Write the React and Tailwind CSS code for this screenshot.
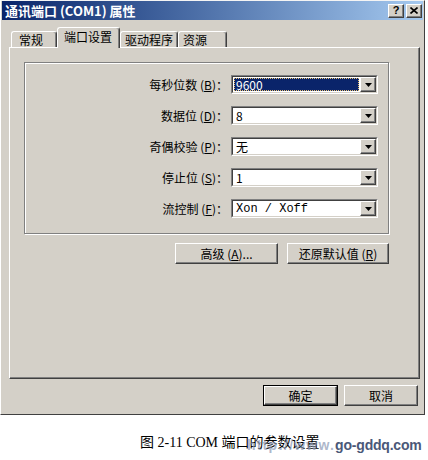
const Raised = ({ className = "", children }) => (
  <div
    className={`flex items-center justify-center border border-t-white border-l-white border-r-[#404040] border-b-[#404040] shadow-[inset_-1px_-1px_0_#808080] bg-[#d4d0c8] ${className}`}
  >
    {children}
  </div>
);

const Arrow = () => (
  <svg width="7" height="4" viewBox="0 0 7 4">
    <polygon points="0,0 7,0 3.5,4" fill="#000" />
  </svg>
);

const Combo = ({ value, selected, mono }) => (
  <div className="ml-[3px] w-[147px] h-[19px] border border-t-[#808080] border-l-[#808080] border-r-white border-b-white">
    <div className="h-full flex border border-t-[#404040] border-l-[#404040] border-r-[#d4d0c8] border-b-[#d4d0c8] bg-white">
      <div className="flex-1 p-[1px]">
        {selected ? (
          <div className="h-full flex items-center bg-[#0a246a] text-white border border-dotted border-[#e8c070] pl-[1px] leading-none">
            {value}
          </div>
        ) : (
          <div
            className={`h-full flex items-center pl-[2px] leading-none ${
              mono ? "font-['Liberation_Mono',monospace] text-[12px]" : ""
            }`}
          >
            {value}
          </div>
        )}
      </div>
      <Raised className="w-[16px] h-full">
        <Arrow />
      </Raised>
    </div>
  </div>
);

const rows = [
  { label: "每秒位数", key: "B", value: "9600", selected: true },
  { label: "数据位", key: "D", value: "8" },
  { label: "奇偶校验", key: "P", value: "无" },
  { label: "停止位", key: "S", value: "1" },
  { label: "流控制", key: "F", value: "Xon / Xoff", mono: true },
];

const tabs = [
  { name: "常规", w: "w-[46px] h-[16px] pl-[7px]" },
  { name: "端口设置", w: "w-[63px] h-[21px] pl-[6px] -mb-px relative z-10 bg-[#d4d0c8]", active: true },
  { name: "驱动程序", w: "w-[58px] h-[16px] pl-[4px]" },
  { name: "资源", w: "w-[49px] h-[16px] pl-[4px]" },
];

export default function App() {
  return (
    <div className="w-[428px] h-[460px] bg-white text-black text-[12px] font-['Noto_Sans_CJK_SC',sans-serif]">
      {/* Dialog window */}
      <div className="w-[425px] h-[415px] bg-[#d4d0c8] border border-t-[#f4f4f4] border-l-white border-r-[#404040] border-b-[#404040] flex flex-col">
        {/* Title bar */}
        <div className="mx-[1px] h-[19px] bg-linear-to-r from-[#0a246a] to-[#a6caf0] flex items-center pl-[3px] pr-[1px]">
          <span className="text-white font-bold text-[13px] leading-none">
            通讯端口 (COM1) 属性
          </span>
          <div className="ml-auto flex gap-[2px]">
            <Raised className="w-[16px] h-[14px]">
              <span className="font-['Liberation_Sans',sans-serif] font-bold text-[11px] leading-none">?</span>
            </Raised>
            <Raised className="w-[16px] h-[14px]">
              <svg width="8" height="7" viewBox="0 0 8 7">
                <path d="M0.5 0.5 L7.5 6.5 M7.5 0.5 L0.5 6.5" stroke="#000" strokeWidth="1.6" />
              </svg>
            </Raised>
          </div>
        </div>

        <div className="ml-[8px] mt-[7px] w-[411px]">
          {/* Tabs */}
          <div className="flex items-end h-[20px] pl-[2px]">
            {tabs.map((t) => (
              <div
                key={t.name}
                className={`${t.w} flex items-center border-t border-l border-white border-r border-r-[#404040] rounded-t-[3px] shadow-[inset_-1px_0_0_#808080] leading-none ${
                  t.active ? "pb-[3px]" : ""
                }`}
              >
                {t.name}
              </div>
            ))}
          </div>

          {/* Tab panel */}
          <div className="h-[332px] border border-t-white border-l-white border-r-[#404040] border-b-[#404040] shadow-[inset_-1px_-1px_0_#808080] pt-[14px] pl-[14px]">
            <div className="w-[365px] h-[172px] border border-[#808080] shadow-[1px_1px_0_#fff,inset_1px_1px_0_#fff] pt-[12px] flex flex-col gap-[12px]">
              {rows.map((r) => (
                <div key={r.key} className="flex items-center h-[19px]">
                  <div className="w-[203px] text-right leading-none whitespace-nowrap">
                    {r.label} (<span className="underline">{r.key}</span>)：
                  </div>
                  <Combo value={r.value} selected={r.selected} mono={r.mono} />
                </div>
              ))}
            </div>

            <div className="mt-[9px] w-[365px] flex justify-end gap-[9px]">
              <Raised className="w-[103px] h-[21px] leading-none">
                高级 (<span className="underline">A</span>)...
              </Raised>
              <Raised className="w-[102px] h-[21px] leading-none">
                还原默认值 (<span className="underline">R</span>)
              </Raised>
            </div>
          </div>

          {/* Dialog buttons */}
          <div className="mt-[6px] flex justify-end gap-[6px] pr-[2px]">
            <div className="w-[75px] h-[21px] border border-black">
              <Raised className="w-full h-full leading-none">确定</Raised>
            </div>
            <Raised className="w-[74px] h-[21px] leading-none">取消</Raised>
          </div>
        </div>
      </div>

      {/* Caption with watermark laid over it */}
      <div className="relative mt-[20px] h-[16px]">
        <div className="pl-[140px] text-[14px] leading-[16px] font-['Liberation_Serif','Noto_Sans_CJK_SC',serif]">
          图 2-11 COM 端口的参数设置
        </div>
        <div className="absolute left-[247px] top-[2px] font-['Liberation_Sans',sans-serif] font-bold text-[14px] leading-[16px] whitespace-nowrap">
          <span className="text-[#8a97b4]/70 tracking-[1.2px]">http://www.</span>
          <span className="text-[#4a5878] tracking-[-0.2px]">go-gddq.com</span>
        </div>
      </div>
    </div>
  );
}
